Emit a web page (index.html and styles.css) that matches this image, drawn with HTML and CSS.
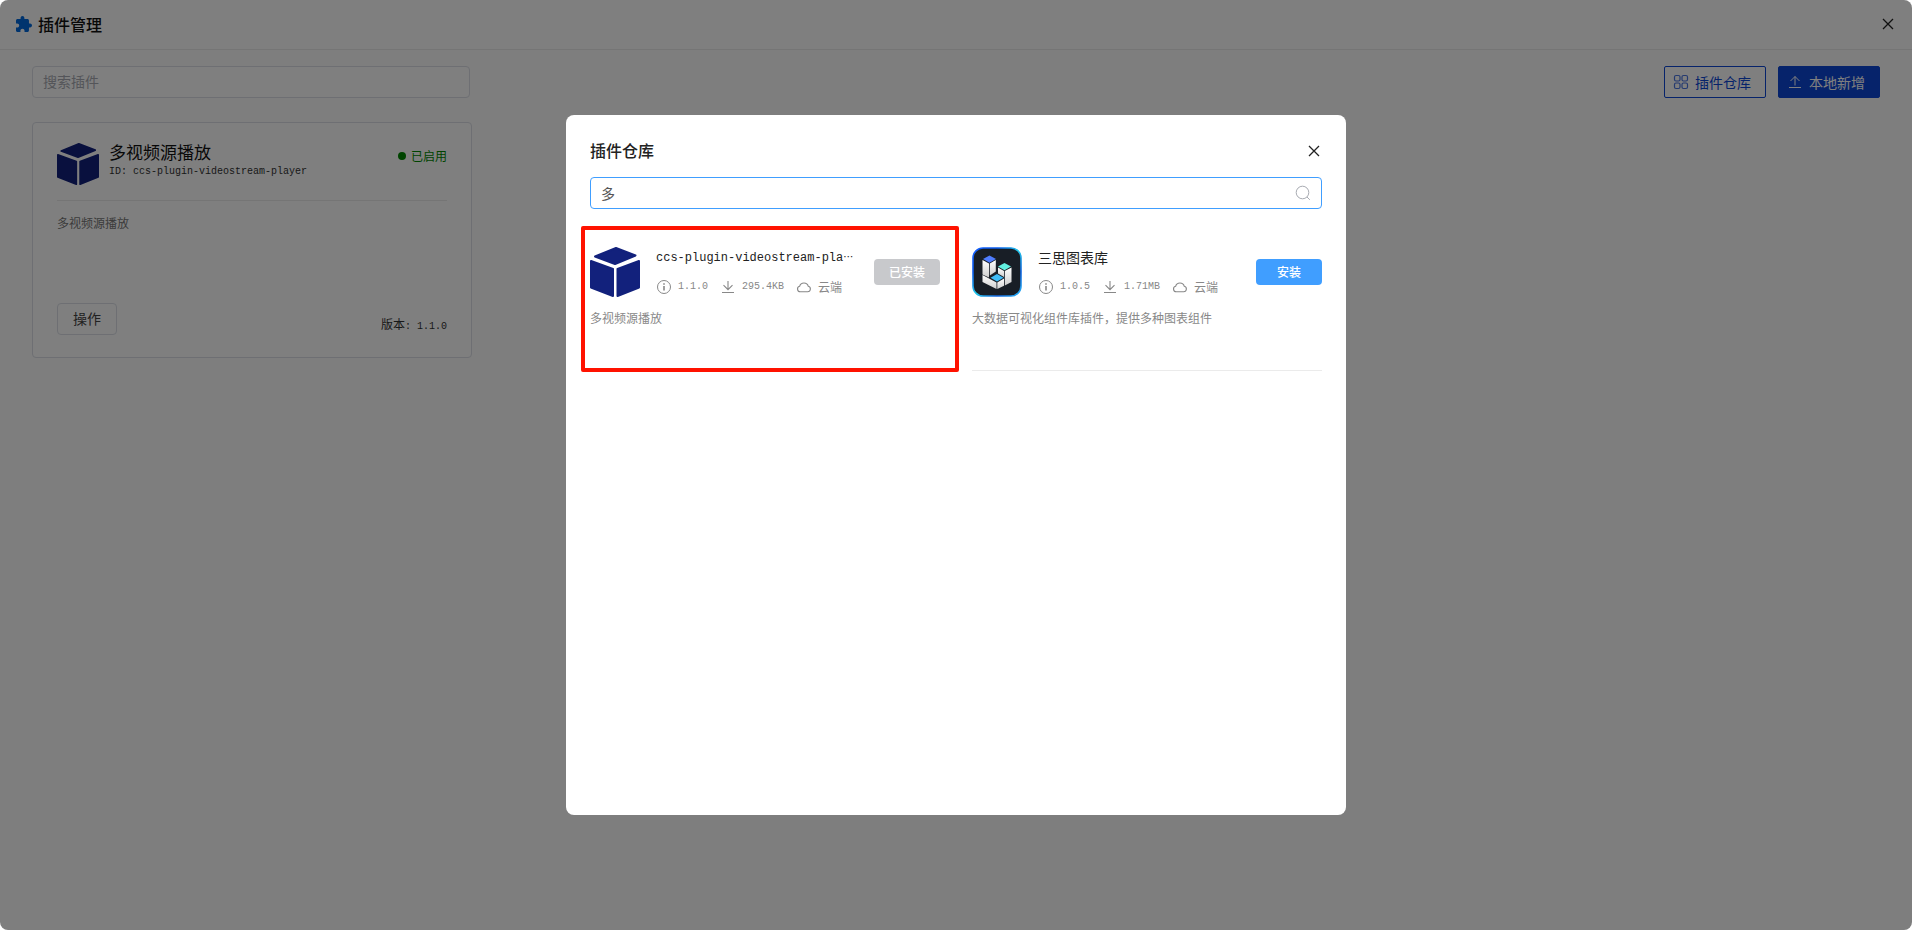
FILE: index.html
```html
<!DOCTYPE html>
<html lang="zh-CN">
<head>
<meta charset="utf-8">
<title>插件管理</title>
<link rel="stylesheet" href="styles.css">
</head>
<body>
<svg class="defs" aria-hidden="true">
  <symbol id="i-close" viewBox="0 0 12 12"><path d="M1 1l10 10M11 1L1 11" fill="none" stroke="currentColor" stroke-width="1.3"/></symbol>
  <symbol id="i-cube" viewBox="0 0 50 50"><g fill="#12217c" stroke="#12217c" stroke-width="2" stroke-linejoin="round"><path d="M26 1L45.500 8.500L25 17L5 9.500Z"/><path d="M1 14L23 22V49L1 40.500Z"/><path d="M49 14L27.500 22V49L49 40.500Z"/></g></symbol>
  <symbol id="i-info" viewBox="0 0 16 16"><circle cx="8" cy="8" r="6.500" fill="none" stroke="currentColor"/><path d="M8 7v4.500M8 4.200v1.600" fill="none" stroke="currentColor" stroke-width="1.600"/></symbol>
  <symbol id="i-down" viewBox="0 0 16 16"><path d="M8 2v8.500M3.500 6.200L8 10.700l4.500-4.500M2 13.500h12" fill="none" stroke="currentColor" stroke-width="1.100"/></symbol>
  <symbol id="i-up" viewBox="0 0 16 16"><path d="M8 11.500V2.500M3.500 7L8 2.500 12.500 7M2 13.500h12" fill="none" stroke="currentColor" stroke-width="1"/></symbol>
  <symbol id="i-cloud" viewBox="0 0 16 16"><path d="M4.300 12.800a2.800 2.800 0 0 1-.7-5.500 4.500 4.500 0 0 1 8.700 0 2.800 2.800 0 0 1-.6 5.500z" fill="none" stroke="currentColor" stroke-width="1.100"/></symbol>
</svg>

<div class="app">
  <header class="topbar">
    <h1 class="brand">
      <svg class="brand-icon" viewBox="2 1 21 21" aria-hidden="true"><path fill="currentColor" d="M20.5 11H19V7c0-1.100-.9-2-2-2h-4V3.500C13 2.120 11.880 1 10.500 1S8 2.120 8 3.500V5H4c-1.100 0-1.990.9-1.990 2v3.800H3.500c1.490 0 2.700 1.210 2.700 2.700s-1.210 2.700-2.700 2.700H2V20c0 1.100.9 2 2 2h3.800v-1.500c0-1.490 1.210-2.700 2.700-2.700 1.490 0 2.700 1.210 2.700 2.700V22H17c1.100 0 2-.9 2-2v-4h1.500c1.380 0 2.500-1.120 2.500-2.500S21.880 11 20.500 11z"/></svg>
      插件管理
    </h1>
    <button class="close" type="button" aria-label="关闭"><svg><use href="#i-close"/></svg></button>
  </header>

  <main class="content">
    <div class="toolbar">
      <input class="search" type="text" placeholder="搜索插件" aria-label="搜索插件">
      <div class="actions">
        <button class="btn btn-outline" type="button">
          <svg class="icon" viewBox="0 0 16 16" aria-hidden="true"><g fill="none" stroke="currentColor" stroke-opacity=".75" stroke-width="1.200"><rect x="1.500" y="1.500" width="5.500" height="5.500" rx="1.500"/><rect x="9" y="1.500" width="5.500" height="5.500" rx="1.500"/><rect x="1.500" y="9" width="5.500" height="5.500" rx="1.500"/><rect x="9" y="9" width="5.500" height="5.500" rx="1.500"/></g></svg>
          插件仓库
        </button>
        <button class="btn btn-solid" type="button"><svg class="icon" aria-hidden="true"><use href="#i-up"/></svg>本地新增</button>
      </div>
    </div>

    <article class="card">
      <div class="card-head">
        <svg class="card-logo" aria-hidden="true"><use href="#i-cube"/></svg>
        <div class="card-info">
          <h2 class="card-title">多视频源播放</h2>
          <p class="mono card-id">ID: ccs-plugin-videostream-player</p>
        </div>
        <span class="status">已启用</span>
      </div>
      <p class="card-desc">多视频源播放</p>
      <div class="card-foot">
        <button class="btn-plain" type="button">操作</button>
        <span class="version">版本<span class="mono">: 1.1.0</span></span>
      </div>
    </article>
  </main>

  <div class="mask">
    <section class="modal" role="dialog" aria-modal="true" aria-labelledby="store-title">
      <header class="modal-head">
        <h2 class="modal-title" id="store-title">插件仓库</h2>
        <button class="close" type="button" aria-label="关闭"><svg><use href="#i-close"/></svg></button>
      </header>
      <label class="field">
        <input class="field-input" type="text" value="多" aria-label="搜索插件仓库">
        <svg class="icon" viewBox="0 0 16 16" aria-hidden="true"><circle cx="7.500" cy="7.500" r="6.300" fill="none" stroke="currentColor"/><path d="M12 12l2.800 2.800" stroke="currentColor"/></svg>
      </label>

      <ul class="list">
        <li class="item item-marked">
          <div class="item-head">
            <svg class="item-logo" aria-hidden="true"><use href="#i-cube"/></svg>
            <div class="item-info">
              <h3 class="item-name item-name-code">ccs-plugin-videostream-pla<span class="ellipsis">…</span></h3>
              <div class="meta">
                <span class="meta-part"><svg class="icon"><use href="#i-info"/></svg><span class="mono">1.1.0</span></span>
                <span class="meta-part"><svg class="icon"><use href="#i-down"/></svg><span class="mono">295.4KB</span></span>
                <span class="meta-part"><svg class="icon"><use href="#i-cloud"/></svg>云端</span>
              </div>
            </div>
            <button class="install" type="button" disabled>已安装</button>
          </div>
          <p class="item-desc">多视频源播放</p>
        </li>
        <li class="item">
          <div class="item-head">
            <svg class="item-logo" viewBox="0 0 50 50" aria-hidden="true">
              <defs>
                <linearGradient id="rim" x1="0" y1="0" x2="1" y2="1"><stop offset="0" stop-color="#1560ff"/><stop offset=".25" stop-color="#0a5cf0"/><stop offset=".5" stop-color="#21c8e8"/><stop offset=".75" stop-color="#1466e0"/><stop offset="1" stop-color="#25b4f5"/></linearGradient>
                <linearGradient id="bar" x1="0" y1="0" x2="0" y2="1"><stop offset="0" stop-color="#ffffff"/><stop offset="1" stop-color="#cfcfcf"/></linearGradient>
              </defs>
              <rect x="1" y="1" width="48" height="48" rx="10" fill="#181e26" stroke="url(#rim)" stroke-width="1.600"/>
              <path d="M10.500 13l6.500 3.500v14l-6.500-3z" fill="url(#bar)"/><path d="M17.800 16.500l6-3.500v11.500l-6 4z" fill="url(#bar)"/>
              <path d="M26 20.500l6 3.500v6l-6-3.500z" fill="url(#bar)"/><path d="M32.800 24l6.700-3.500v14.500l-6.700 3.500z" fill="url(#bar)"/>
              <path d="M10.500 28l14 7.500v6.500l-14-7z" fill="url(#bar)"/><path d="M25.300 35.500l6.700-4v7.300l-6.700 3.200z" fill="url(#bar)"/>
              <path d="M17.500 8.500l6.500 3.500-6.500 3.700-6.500-3.700z" fill="#4f7dff"/><path d="M32.500 16l6.500 3.500-6.500 3.700-6.500-3.700z" fill="#62f0e0"/><path d="M25 27l6.500 3.700-6.500 3.700-6.500-3.700z" fill="#3fbdf8"/>
            </svg>
            <div class="item-info">
              <h3 class="item-name">三思图表库</h3>
              <div class="meta">
                <span class="meta-part"><svg class="icon"><use href="#i-info"/></svg><span class="mono">1.0.5</span></span>
                <span class="meta-part"><svg class="icon"><use href="#i-down"/></svg><span class="mono">1.71MB</span></span>
                <span class="meta-part"><svg class="icon"><use href="#i-cloud"/></svg>云端</span>
              </div>
            </div>
            <button class="install" type="button">安装</button>
          </div>
          <p class="item-desc">大数据可视化组件库插件，提供多种图表组件</p>
        </li>
      </ul>
    </section>
  </div>
</div>
</body>
</html>
```
FILE: styles.css
```css
* { box-sizing: border-box; }

body {
  margin: 0;
  background: #fff;
  color: #222;
  font: 14px/20px "Noto Sans CJK SC", sans-serif;
}

h1, h2, h3, p, ul { margin: 0; padding: 0; font-weight: 400; }
button, input { font: inherit; }
button { cursor: pointer; }
.defs { position: absolute; width: 0; height: 0; }
.icon { flex: none; width: 16px; height: 16px; }
.mono { font-family: "Liberation Mono", monospace; font-size: 10px; line-height: 16px; }

.app {
  position: relative;
  min-height: 100vh;
  border-radius: 8px;
  overflow: hidden;
  background: #fcfcfc;
}

.topbar {
  display: flex;
  align-items: center;
  justify-content: space-between;
  height: 50px;
  padding: 0 16px 2px;
  background: #fff;
  border-bottom: 1px solid #eaeaea;
}
.brand { display: flex; align-items: center; gap: 6px; font-size: 16px; font-weight: 500; color: #111; }
.brand-icon { width: 16px; height: 16px; color: #0068dc; }

.close {
  display: flex;
  align-items: center;
  justify-content: center;
  width: 16px;
  height: 16px;
  padding: 0;
  border: 0;
  background: none;
  color: #222;
}
.close svg { width: 12px; height: 12px; }

.content { padding: 16px 32px; }
.toolbar { display: flex; justify-content: space-between; margin-bottom: 24px; }
.search {
  width: 438px;
  height: 32px;
  padding: 0 10px 2px;
  border: 1px solid #dcdfe6;
  border-radius: 4px;
  background: #fff;
  outline: 0;
}
.search::placeholder { color: #a8abb2; }

.actions { display: flex; gap: 12px; }
.btn {
  display: flex;
  align-items: center;
  gap: 6px;
  height: 32px;
  padding: 0 14px 1px 8px;
  border: 1px solid #0d47d6;
  border-radius: 2px;
}
.btn-outline { background: #fff; color: #0d47d6; }
.btn-solid { background: #0d47d6; color: #fff; }

.card {
  width: 440px;
  padding: 20px 24px 22px;
  border: 1px solid #dcdfe6;
  border-radius: 4px;
  background: #fff;
}
.card-head {
  display: flex;
  gap: 10px;
  padding-bottom: 15px;
  border-bottom: 1px solid #eaeaea;
}
.card-logo { flex: none; width: 42px; height: 42px; }
.card-info { flex: 1; }
.card-title { margin-bottom: 3px; font-size: 17px; line-height: 18px; color: #111; }
.card-id { color: #333; }
.status {
  display: flex;
  align-items: center;
  gap: 5px;
  height: 26px;
  font-size: 12px;
  color: #008800;
}
.status::before { content: ""; width: 8px; height: 8px; border-radius: 50%; background: currentColor; }
.card-desc { min-height: 90px; margin-top: 12px; font-size: 12px; color: #777; }
.card-foot { display: flex; align-items: center; justify-content: space-between; }
.btn-plain {
  width: 60px;
  height: 32px;
  padding: 0 0 2px;
  border: 1px solid #dcdfe6;
  border-radius: 4px;
  background: #fff;
  color: #444;
}
.version { padding-top: 10px; font-size: 12px; color: #333; }

.mask {
  position: absolute;
  inset: 0;
  display: flex;
  align-items: center;
  justify-content: center;
  background: rgba(0, 0, 0, .5);
}
.modal {
  width: 780px;
  max-width: 100%;
  min-height: 700px;
  padding: 24px;
  border-radius: 8px;
  background: #fff;
}
.modal-head { display: flex; align-items: center; justify-content: space-between; height: 24px; margin-bottom: 14px; }
.modal-title { padding-bottom: 2px; font-size: 16px; font-weight: 500; }

.field {
  display: flex;
  align-items: center;
  height: 32px;
  padding: 0 10px;
  border: 1px solid #409eff;
  border-radius: 4px;
  color: #a8abb2;
}
.field-input { flex: 1; min-width: 0; padding: 0; border: 0; outline: 0; background: none; color: #555; }

.list {
  display: grid;
  grid-template-columns: 1fr 1fr;
  gap: 32px;
  margin-top: 22px;
  list-style: none;
}
.item {
  position: relative;
  min-height: 140px;
  padding-top: 16px;
  border-bottom: 1px solid #ebebeb;
}
.item-marked::after {
  content: "";
  position: absolute;
  inset: -5px -19px -2px -9px;
  border: 4px solid #ff1200;
  border-radius: 2px;
  pointer-events: none;
}
.item-head { display: flex; align-items: center; gap: 16px; height: 50px; }
.item-logo { flex: none; width: 50px; height: 50px; }
.item-info { flex: 1; min-width: 0; }
.item-name { height: 20px; margin-bottom: 10px; font-size: 14px; line-height: 20px; white-space: nowrap; color: #222; }
.item-name-code { font-family: "Liberation Mono", "Noto Sans CJK SC", monospace; font-size: 12px; }
.ellipsis { font-family: "Noto Sans CJK SC", sans-serif; font-size: 10px; }
.meta { display: flex; gap: 12px; height: 20px; font-size: 12px; color: #888; }
.meta-part { display: flex; align-items: center; gap: 6px; white-space: nowrap; }
.install {
  width: 66px;
  height: 26px;
  padding: 0;
  border: 0;
  border-radius: 4px;
  background: #409eff;
  color: #fff;
  font-size: 12px;
  font-weight: 500;
}
.install:disabled { background: #c8c9cc; color: #fff; cursor: default; }
.item-desc { margin-top: 11px; font-size: 12px; color: #888; }
```
